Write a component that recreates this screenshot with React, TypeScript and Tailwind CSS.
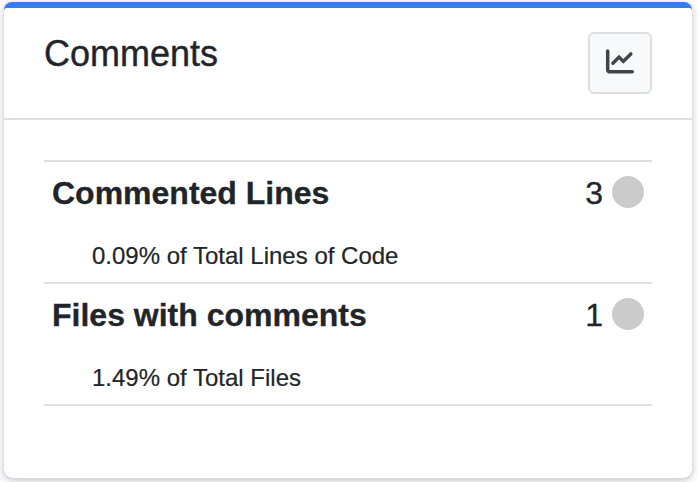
type Metric = { label: string; value: string; detail: string };

const metrics: Metric[] = [
  { label: "Commented Lines", value: "3", detail: "0.09% of Total Lines of Code" },
  { label: "Files with comments", value: "1", detail: "1.49% of Total Files" },
];

function ChartIcon() {
  return (
    <svg
      width="32"
      height="30"
      viewBox="0 0 32 30"
      fill="none"
      stroke="#444444"
      strokeWidth="3.5"
      strokeLinecap="round"
    >
      <path d="M3.7 3.1V21.4Q3.7 23.8 6.1 23.8H28.3" />
      <path d="M8.9 15.2L15 9.1L19.3 13.4L26.8 5.9" />
    </svg>
  );
}

function MetricRow({ label, value, detail }: Metric) {
  return (
    <div className="h-[122px] border-t-2 border-[#dedfe0] px-2">
      <div className="flex h-[60px] items-center justify-between text-[32px] leading-[48px]">
        <h3 className="pt-[2px] font-bold [-webkit-text-stroke:0.3px_#212529]">{label}</h3>
        <div className="flex items-center gap-[9px]">
          <span className="pt-[2px] [-webkit-text-stroke:0.3px_#212529]">{value}</span>
          <span className="size-8 rounded-full bg-[#cbcbcb]" />
        </div>
      </div>
      <p className="pt-[16px] pl-10 text-2xl leading-9 [-webkit-text-stroke:0.2px_#212529]">{detail}</p>
    </div>
  );
}

export default function App() {
  return (
    <div className="h-[482px] w-[698px] overflow-hidden bg-white pt-[2px] pl-1 font-['Liberation_Sans',Arial,sans-serif] text-[#212529]">
      <section className="h-[476px] w-[688px] rounded-[8px] bg-[#377dfa] pt-[6px] shadow-[0_2px_8px_rgba(0,0,0,0.25)]">
        <div className="h-[470px] rounded-t-[3px] rounded-b-[8px] bg-white">
          <header className="flex h-[112px] items-start justify-between border-b-2 border-[#dedfe0] pt-6 pr-10 pl-10">
            <h2 className="text-[36px] leading-[44px] [-webkit-text-stroke:0.4px_#212529]">Comments</h2>
            <button
              aria-label="Show chart"
              className="flex h-[62px] w-[64px] items-center justify-center rounded-[6px] border-2 border-[#dedfe0] bg-[#f8f9fb]"
            >
              <ChartIcon />
            </button>
          </header>
          <div className="mx-10 mt-10 border-b-2 border-[#dedfe0]">
            {metrics.map((metric) => (
              <MetricRow key={metric.label} {...metric} />
            ))}
          </div>
        </div>
      </section>
    </div>
  );
}
